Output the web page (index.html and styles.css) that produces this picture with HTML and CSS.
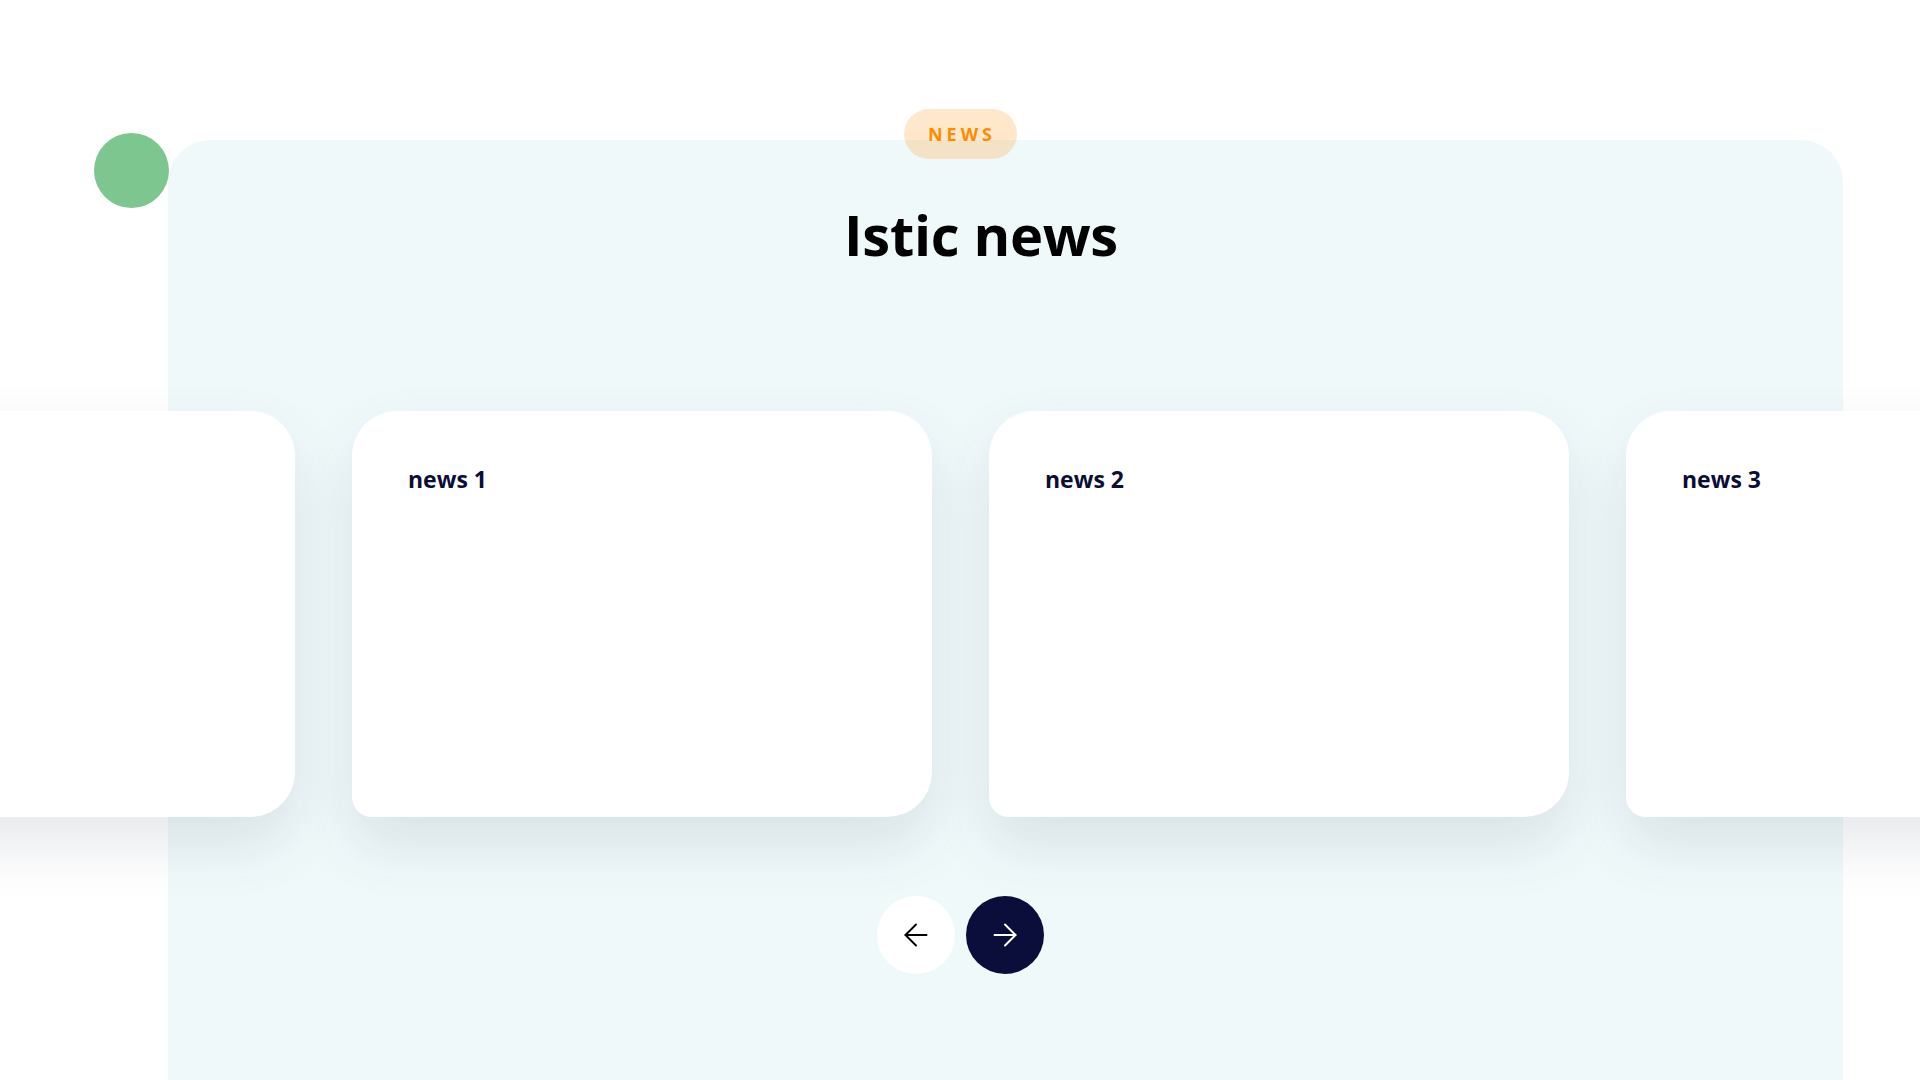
FILE: index.html
```html
<!DOCTYPE html>
<html lang="en">
<head>
<meta charset="utf-8">
<title>Istic news</title>
<link rel="stylesheet" href="styles.css">
</head>
<body>
<section class="news-section">
  <span class="dot" aria-hidden="true"></span>
  <div class="content">
    <span class="badge">NEWS</span>
    <h1 class="title">Istic news</h1>
    <div class="carousel">
      <div class="track">
        <article class="card"><h3 class="card-title"></h3></article>
        <article class="card"><h3 class="card-title">news 1</h3></article>
        <article class="card"><h3 class="card-title">news 2</h3></article>
        <article class="card"><h3 class="card-title">news 3</h3></article>
      </div>
    </div>
    <div class="controls">
      <button class="nav-btn prev" aria-label="Previous">
        <svg viewBox="0 0 24 24" width="36" height="36" fill="none" stroke="currentColor" stroke-width="1.3" stroke-linecap="round" stroke-linejoin="round"><path d="M19 12H5"/><path d="M12 19l-7-7 7-7"/></svg>
      </button>
      <button class="nav-btn next" aria-label="Next">
        <svg viewBox="0 0 24 24" width="36" height="36" fill="none" stroke="currentColor" stroke-width="1.3" stroke-linecap="round" stroke-linejoin="round"><path d="M5 12h14"/><path d="M12 5l7 7-7 7"/></svg>
      </button>
    </div>
  </div>
</section>
</body>
</html>
```
FILE: styles.css
```css
html, body {
  margin: 0;
  padding: 0;
  background: #ffffff;
  overflow: hidden;
}

body {
  font-family: "Open Sans", "Noto Sans", "Liberation Sans", sans-serif;
}

.news-section {
  position: relative;
  min-height: 1120px;
  padding-top: 109px;
  box-sizing: border-box;
}

.news-section::before {
  content: "";
  position: absolute;
  left: 168px;
  right: 77px;
  top: 140px;
  bottom: 0;
  background: #f0f9fa;
  border-radius: 42px 42px 0 0;
  z-index: 0;
}

.dot {
  position: absolute;
  left: 94px;
  top: 133px;
  width: 75px;
  height: 75px;
  border-radius: 50%;
  background: #7ec690;
  z-index: 1;
}

.content {
  position: relative;
  z-index: 1;
  display: flex;
  flex-direction: column;
  align-items: center;
}

.badge {
  display: flex;
  align-items: center;
  justify-content: center;
  width: 113px;
  height: 50px;
  box-sizing: border-box;
  padding-left: 4px;
  border-radius: 25px;
  background: rgba(255, 168, 64, 0.27);
  color: #ff8c00;
  font-size: 18px;
  font-weight: 700;
  letter-spacing: 4px;
}

.title {
  margin: 40px 0 0;
  padding-left: 42px;
  font-size: 56px;
  line-height: 70px;
  font-weight: 700;
  color: #000000;
  letter-spacing: -0.3px;
}

.carousel {
  align-self: stretch;
  overflow: hidden;
  margin-top: 82px;
  padding: 60px 0 79px;
}

.track {
  display: flex;
  gap: 57px;
  transform: translateX(-285px);
}

.card {
  flex: 0 0 580px;
  height: 406px;
  box-sizing: border-box;
  padding: 53px 56px 0;
  background: #ffffff;
  border-radius: 45px 45px 45px 20px;
  box-shadow: 0 28px 60px rgba(30, 45, 70, 0.11);
}

.card-title {
  margin: 0;
  font-size: 23px;
  line-height: 30px;
  font-weight: 700;
  color: #0c0d36;
}

.controls {
  display: flex;
  gap: 11px;
}

.nav-btn {
  width: 78px;
  height: 78px;
  border: none;
  border-radius: 50%;
  padding: 0;
  display: flex;
  align-items: center;
  justify-content: center;
  cursor: pointer;
}

.nav-btn.prev {
  background: #ffffff;
  color: #000000;
}

.nav-btn.next {
  background: #0b0d3a;
  color: #ffffff;
}
```
